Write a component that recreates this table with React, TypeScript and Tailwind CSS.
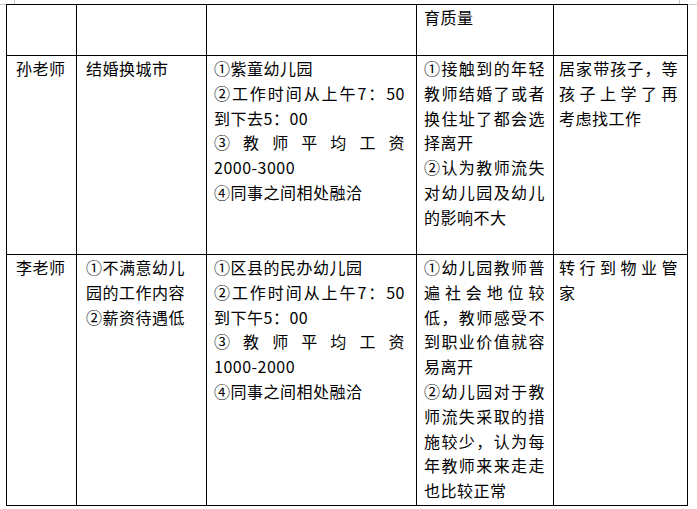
type Line = { text: string; full?: boolean };

const l = (text: string): Line => ({ text, full: true });
const last = (text: string): Line => ({ text });

const rows: { h: string; cells: Line[][] }[] = [
  {
    h: 'h-[51px]',
    cells: [[], [], [], [last('育质量')], []],
  },
  {
    h: 'h-[199px]',
    cells: [
      [last('孙老师')],
      [last('结婚换城市')],
      [
        last('①紫童幼儿园'),
        l('②工作时间从上午7：50'),
        last('到下去5：00'),
        l('③教师平均工资'),
        last('2000-3000'),
        last('④同事之间相处融洽'),
      ],
      [
        l('①接触到的年轻'),
        l('教师结婚了或者'),
        l('换住址了都会选'),
        last('择离开'),
        l('②认为教师流失'),
        l('对幼儿园及幼儿'),
        last('的影响不大'),
      ],
      [l('居家带孩子，等'), l('孩子上学了再'), last('考虑找工作')],
    ],
  },
  {
    h: 'h-[251px]',
    cells: [
      [last('李老师')],
      [last('①不满意幼儿'), last('园的工作内容'), last('②薪资待遇低')],
      [
        last('①区县的民办幼儿园'),
        l('②工作时间从上午7：50'),
        last('到下午5：00'),
        l('③教师平均工资'),
        last('1000-2000'),
        last('④同事之间相处融洽'),
      ],
      [
        l('①幼儿园教师普'),
        l('遍社会地位较'),
        l('低，教师感受不'),
        l('到职业价值就容'),
        last('易离开'),
        l('②幼儿园对于教'),
        l('师流失采取的措'),
        l('施较少，认为每'),
        l('年教师来来走走'),
        last('也比较正常'),
      ],
      [l('转行到物业管'), last('家')],
    ],
  },
];

// per column padding, measured off the page
const pads = [
  'pl-[9px] pr-[6px]',
  'pl-[9px] pr-[6px]',
  'pl-[7px] pr-[11px]',
  'pl-[7px] pr-[8px]',
  'pl-[5px] pr-[9px]',
];

function Cell({ lines, pad }: { lines: Line[]; pad: string }) {
  return (
    <td className={`border-r border-b border-black align-top p-0 ${pad}`}>
      {lines.map((ln, i) => (
        <div
          key={i}
          className={
            ln.full
              ? 'text-justify [text-align-last:justify] [text-justify:inter-character] whitespace-nowrap'
              : 'whitespace-nowrap'
          }
        >
          {ln.text}
        </div>
      ))}
    </td>
  );
}

export default function App() {
  return (
    <div
      className="relative w-[697px] h-[509px] overflow-hidden bg-white pl-[6px] pt-[4px] text-black text-[16px] leading-[24.8px] tracking-[0.5px]"
      style={{ fontFamily: '"Noto Sans CJK SC", "Liberation Sans", sans-serif' }}
    >
      {/* page corner marks */}
      <div className="absolute left-0 top-[4px] w-[6px] h-px bg-[#c8c8c8]" />
      <div className="absolute left-[14px] top-0 w-px h-[4px] bg-[#c8c8c8]" />
      <div className="absolute left-[679px] top-0 w-px h-[4px] bg-[#c8c8c8]" />
      <div className="absolute left-[689px] top-[4px] w-[8px] h-px bg-[#c8c8c8]" />

      <table className="table-fixed border-separate border-spacing-0 border-l border-t border-black w-[682px]">
        <colgroup>
          <col className="w-[70px]" />
          <col className="w-[130px]" />
          <col className="w-[210px]" />
          <col className="w-[137px]" />
          <col className="w-[134px]" />
        </colgroup>
        <tbody>
          {rows.map((r, ri) => (
            <tr key={ri} className={r.h}>
              {r.cells.map((c, ci) => (
                <Cell key={ci} lines={c} pad={pads[ci]} />
              ))}
            </tr>
          ))}
        </tbody>
      </table>
    </div>
  );
}
